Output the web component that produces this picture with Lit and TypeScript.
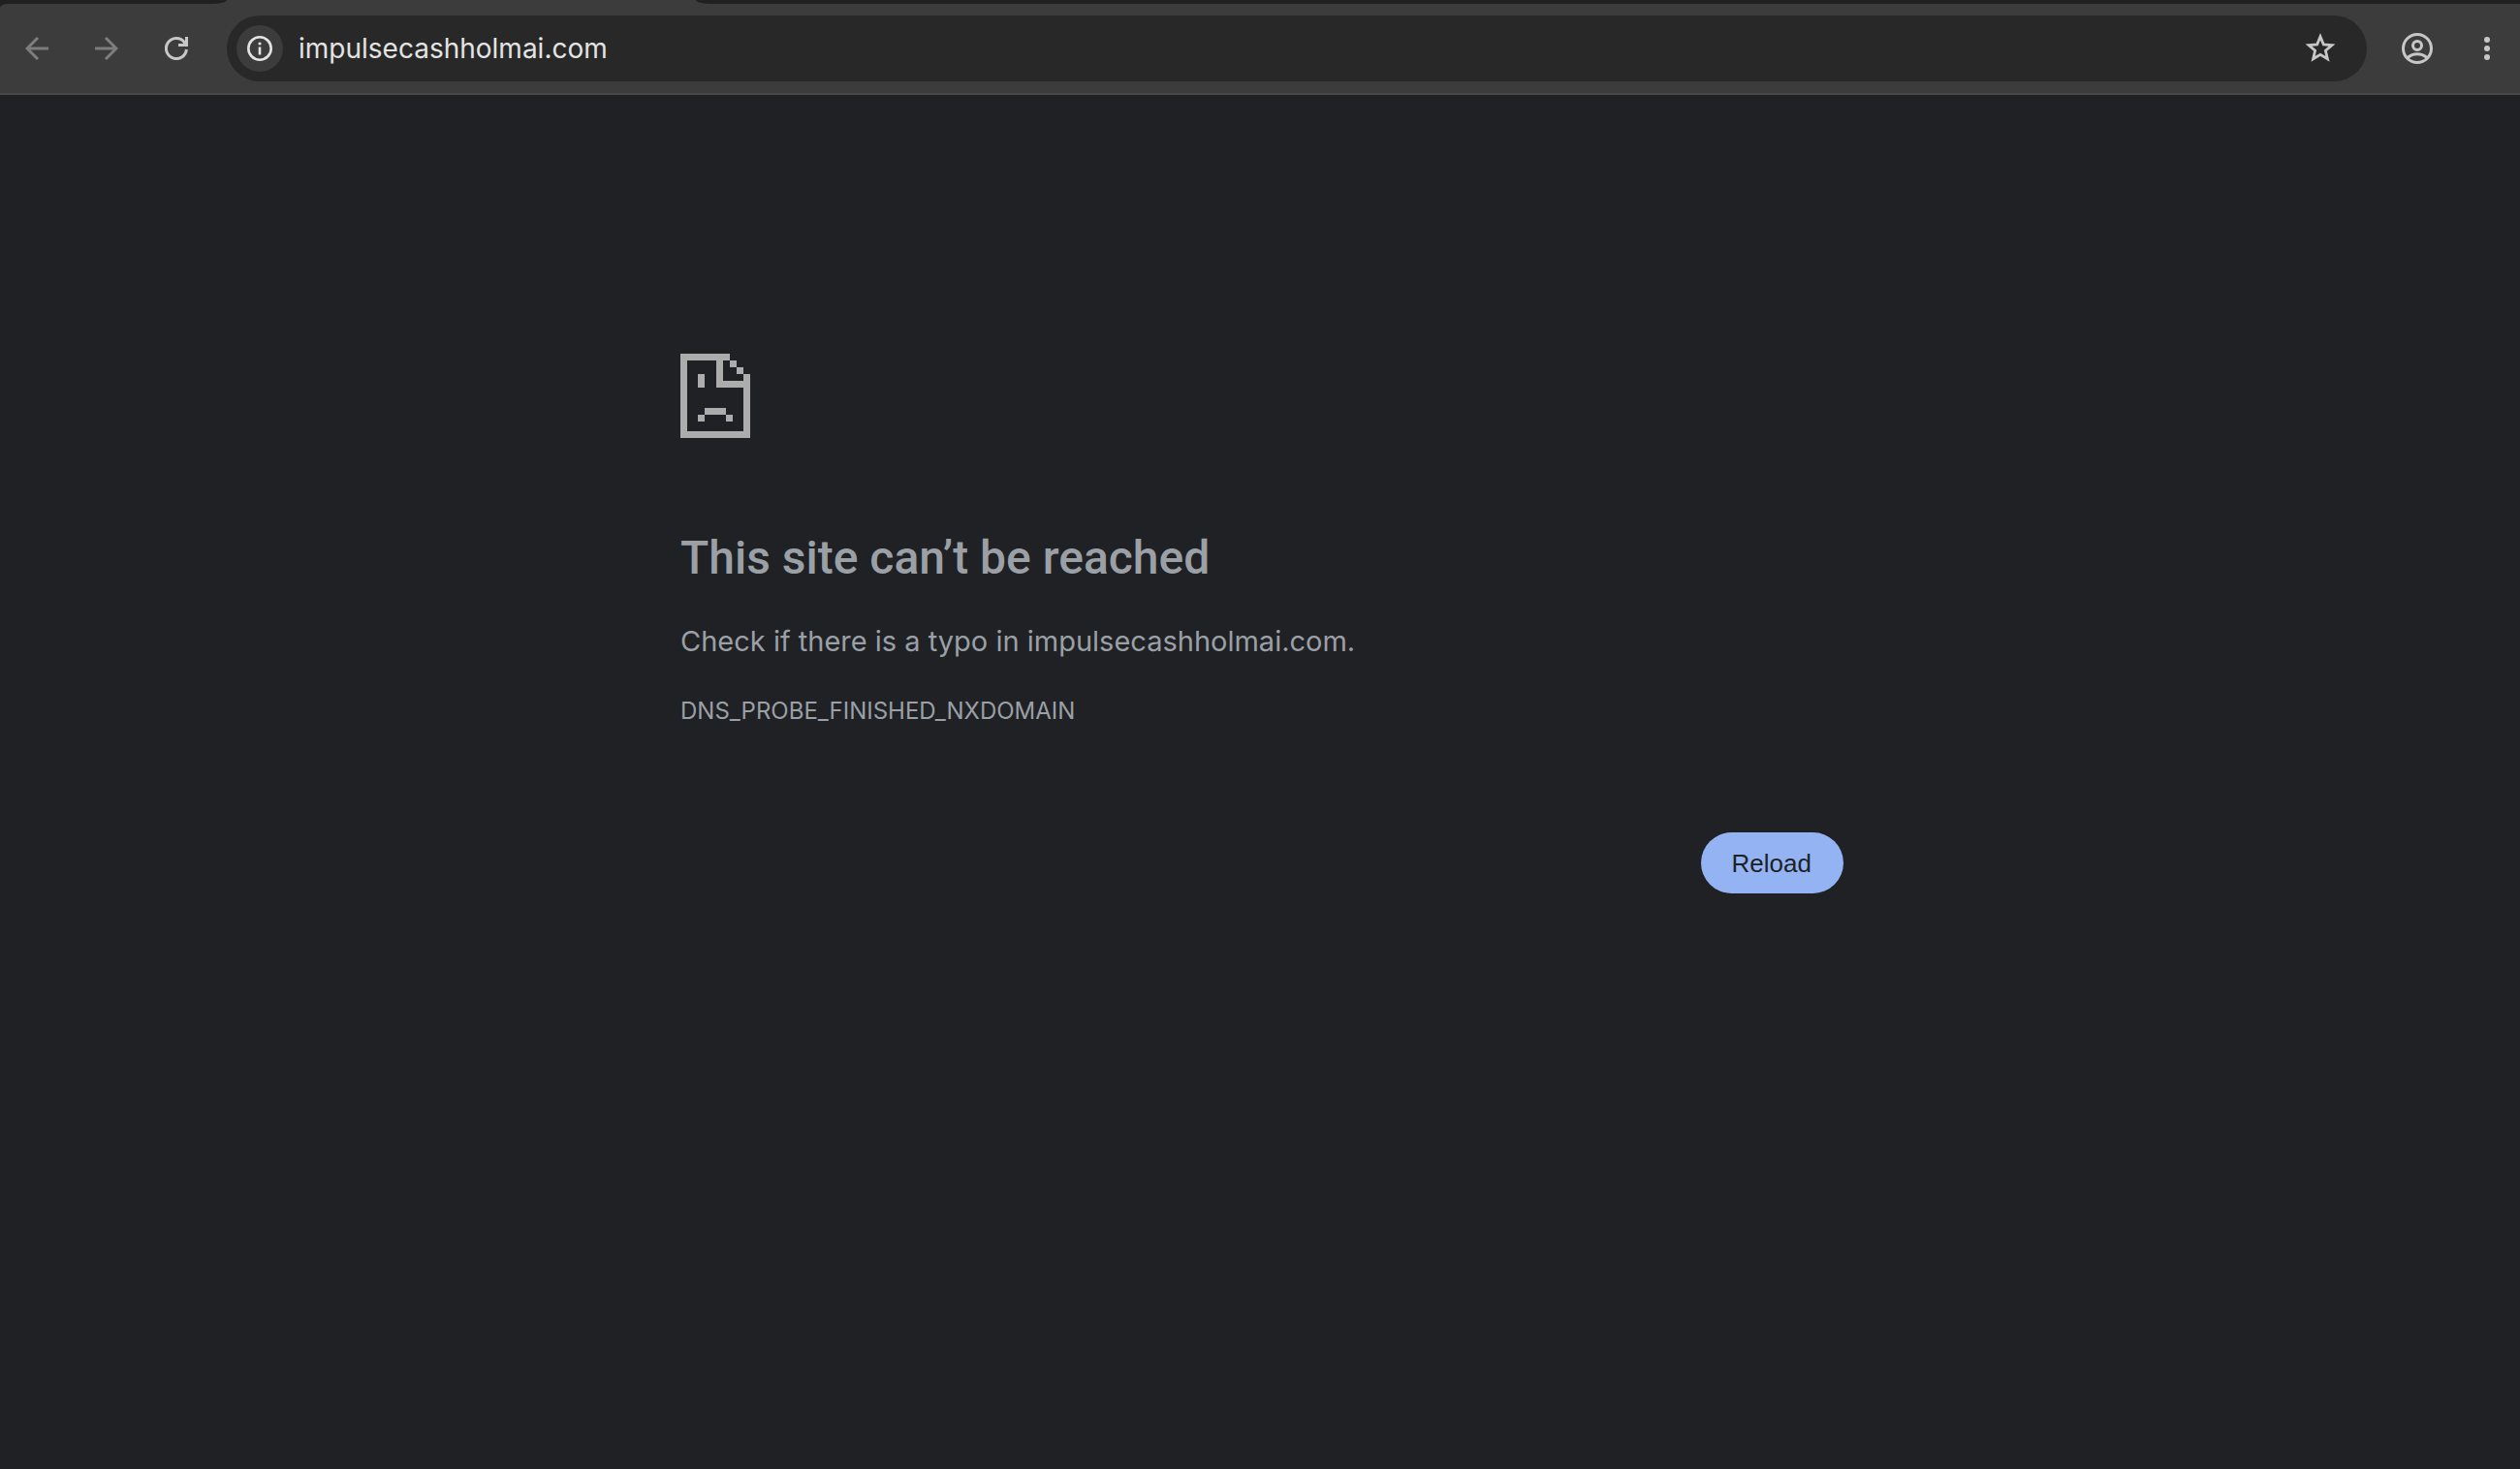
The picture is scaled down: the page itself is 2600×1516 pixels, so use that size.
import { LitElement, html, css } from "lit";
import { customElement } from "lit/decorators.js";

@customElement("browser-toolbar")
export class BrowserToolbar extends LitElement {
  static styles = css`
    :host {
      display: block;
      background: #1f2120;
      font-family: Inter, "Liberation Sans", sans-serif;
    }
    .tabs {
      display: flex;
      height: 4px;
      background: #3c3c3c;
    }
    .strip {
      background: #1f2120;
    }
    .before {
      width: 234px;
      border-bottom-right-radius: 16px 4px;
    }
    .tab {
      width: 484px;
    }
    .after {
      flex: 1;
      border-bottom-left-radius: 16px 4px;
    }
    .bar {
      display: flex;
      align-items: center;
      padding: 12px 10px 12px 14px;
      background: #3c3c3c;
      border-bottom: 2px solid #474947;
      border-top-left-radius: 8px 4px;
    }
    button {
      display: grid;
      place-items: center;
      width: 48px;
      height: 48px;
      margin: 0;
      padding: 0;
      border: 0;
      border-radius: 50%;
      background: none;
      color: #c7c7c7;
    }
    svg {
      display: block;
    }
    .nav {
      display: flex;
      gap: 24px;
      margin-right: 28px;
    }
    .nav button:disabled {
      color: #7d7d7d;
    }
    .omnibox {
      display: flex;
      flex: 1;
      align-items: center;
      height: 68px;
      padding: 0 24px 0 10px;
      box-sizing: border-box;
      border-radius: 34px;
      background: #282828;
    }
    .omnibox .info {
      background: #3c3c3c;
      color: #e3e3e3;
    }
    input {
      flex: 1;
      min-width: 0;
      height: 48px;
      margin: 0;
      padding: 0 16px;
      border: 0;
      outline: 0;
      background: none;
      color: #e3e3e3;
      font: 400 28px/48px Inter, "Liberation Sans", sans-serif;
    }
    .side {
      display: flex;
      gap: 24px;
      margin-left: 28px;
    }
  `;

  render() {
    return html`
      <div class="tabs">
        <div class="strip before"></div>
        <div class="tab"></div>
        <div class="strip after"></div>
      </div>
      <div class="bar">
        <div class="nav">
          <button aria-label="Back" disabled>
            <svg width="24" height="24" viewBox="0 0 24 24" fill="none" stroke="currentColor" stroke-width="3">
              <path d="M24 12H2M13 1 2 12l11 11" />
            </svg>
          </button>
          <button aria-label="Forward" disabled>
            <svg width="24" height="24" viewBox="0 0 24 24" fill="none" stroke="currentColor" stroke-width="3">
              <path d="M0 12h22M11 1l11 11-11 11" />
            </svg>
          </button>
          <button aria-label="Reload this page">
            <svg width="24" height="24" viewBox="0 0 24 24" fill="none" stroke="currentColor" stroke-width="3">
              <path d="M22.400 13A10.500 10.500 0 1 1 20 5.300L22 8" />
              <path d="M22.500 0v8.500H14" />
            </svg>
          </button>
        </div>
        <div class="omnibox">
          <button class="info" aria-label="View site information">
            <svg width="26" height="26" viewBox="0 0 26 26" fill="none" stroke="currentColor">
              <circle cx="13" cy="13" r="11.700" stroke-width="2.600" />
              <path d="M13 11.500V19.500" stroke-width="2.600" />
              <circle cx="13" cy="8" r="1.600" fill="currentColor" stroke="none" />
            </svg>
          </button>
          <input type="text" aria-label="Address and search bar" value="impulsecashholmai.com" spellcheck="false" />
          <button aria-label="Bookmark this tab">
            <svg width="32" height="32" viewBox="0 0 32 32" fill="none" stroke="currentColor" stroke-width="2.800">
              <path d="M16 3.800 19.300 11.900 28 12.600 21.400 18.300 23.400 26.800 16 22.300 8.600 26.800 10.600 18.300 4 12.600 12.700 11.900Z" />
            </svg>
          </button>
        </div>
        <div class="side">
          <button aria-label="Profile">
            <svg width="32" height="32" viewBox="0 0 32 32" fill="none" stroke="currentColor" stroke-width="3">
              <circle cx="16" cy="16" r="14.500" />
              <circle cx="16" cy="13" r="4.500" />
              <path d="M6 25.500Q10.500 21.800 16 21.800T26 25.500" />
            </svg>
          </button>
          <button aria-label="Menu">
            <svg width="6" height="24" viewBox="0 0 6 24" fill="currentColor">
              <circle cx="3" cy="3" r="3" />
              <circle cx="3" cy="12" r="3" />
              <circle cx="3" cy="21" r="3" />
            </svg>
          </button>
        </div>
      </div>
    `;
  }
}

@customElement("error-page")
export class ErrorPage extends LitElement {
  static styles = css`
    :host {
      display: block;
      padding: 267px 0 0 4px;
      color: #9aa0a6;
      font-family: Inter, "Liberation Sans", sans-serif;
    }
    main {
      max-width: 1200px;
      margin: 0 auto;
    }
    svg {
      display: block;
      color: #acacac;
    }
    h1 {
      margin: 96px 0 0;
      font-family: Roboto, "Liberation Sans", sans-serif;
      font-size: 48px;
      line-height: 56px;
      font-weight: 500;
    }
    p {
      margin: 36px 0 0;
      font-size: 29px;
      line-height: 44px;
    }
    .code {
      margin-top: 34px;
      font-size: 24px;
      line-height: 32px;
    }
    .actions {
      display: flex;
      justify-content: flex-end;
      margin-top: 109px;
    }
    button {
      height: 63px;
      padding: 0 33px 0 32px;
      border: 0;
      border-radius: 32px;
      background: #94b3f3;
      color: #202124;
      font: 400 26px/32px "Liberation Sans", Arial, sans-serif;
    }
  `;

  render() {
    return html`
      <main>
        <svg width="72" height="87" viewBox="0 0 72 87" fill="currentColor" shape-rendering="crispEdges" aria-hidden="true">
          <path d="M0 0H51V7H44V28H65V21H72V87H0ZM7 7V80H65V35H37V7Z" fill-rule="evenodd" />
          <path d="M51 7h7v7h-7zM58 14h7v7h-7zM18 21h7v14h-7zM25 56h22v7H25zM18 63h7v7h-7zM47 63h7v7h-7z" />
        </svg>
        <h1>This site can’t be reached</h1>
        <p>Check if there is a typo in impulsecashholmai.com.</p>
        <p class="code">DNS_PROBE_FINISHED_NXDOMAIN</p>
        <div class="actions"><button>Reload</button></div>
      </main>
    `;
  }
}

@customElement("app-root")
export class AppRoot extends LitElement {
  static styles = css`
    :host {
      display: block;
      min-height: 100vh;
      background: #202124;
    }
  `;

  render() {
    return html`
      <browser-toolbar></browser-toolbar>
      <error-page></error-page>
    `;
  }
}
